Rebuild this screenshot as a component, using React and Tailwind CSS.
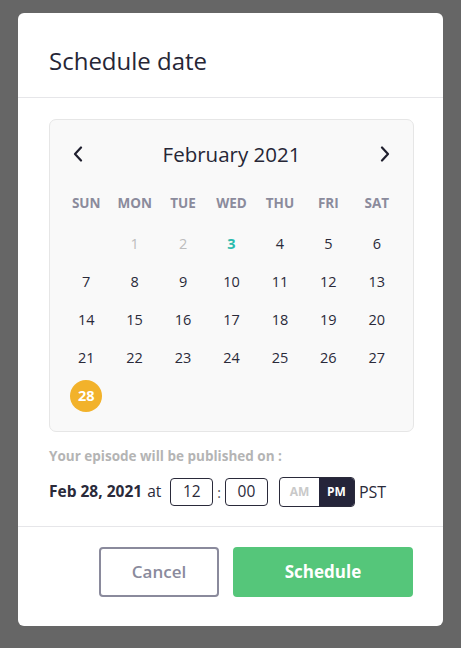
import React from "react";

const font = { fontFamily: '"Open Sans", "Noto Sans", sans-serif' };

function Chevron({ dir }) {
  return (
    <svg width="12" height="16" viewBox="0 0 12 16" fill="none">
      {dir === "left" ? (
        <path d="M9 1.5 L3 8 L9 14.5" stroke="#1f1f2e" strokeWidth="2.2" strokeLinecap="round" strokeLinejoin="round" />
      ) : (
        <path d="M3 1.5 L9 8 L3 14.5" stroke="#1f1f2e" strokeWidth="2.2" strokeLinecap="round" strokeLinejoin="round" />
      )}
    </svg>
  );
}

export default function App() {
  const heads = ["SUN", "MON", "TUE", "WED", "THU", "FRI", "SAT"];
  const cells = [null];
  for (let i = 1; i <= 28; i++) cells.push(i);

  return (
    <div className="w-[461px] h-[648px] bg-[#666666] pt-[13px] pl-[18px] overflow-hidden" style={font}>
      <div className="w-[425px] h-[613px] bg-white rounded-[6px] flex flex-col">
        <div className="h-[85px] border-b border-[#e6e6e9] pl-[31px] pt-[32px]">
          <div className="text-[24px] leading-[32px] font-medium text-[#262636]">Schedule date</div>
        </div>

        <div className="px-[31px] pt-[21px]">
          <div className="w-[365px] h-[313px] bg-[#f9f9f9] border border-[#e6e6e6] rounded-[7px] px-[12px]">
            <div className="mt-[14px] h-[40px] flex items-center justify-between px-[10px]">
              <Chevron dir="left" />
              <div className="text-[20.5px] text-[#262636]">February 2021</div>
              <Chevron dir="right" />
            </div>
            <div className="mt-[10px] h-[38px] grid grid-cols-7 items-center">
              {heads.map((h) => (
                <div key={h} className="text-center text-[13.5px] font-bold text-[#8b8b9c]">{h}</div>
              ))}
            </div>
            <div className="mt-[3px] grid grid-cols-7">
              {cells.map((d, i) => {
                let inner = null;
                if (d === 28) {
                  inner = (
                    <div className="w-[32px] h-[32px] rounded-full bg-[#f2b22b] text-white font-bold text-[14.5px] flex items-center justify-center">28</div>
                  );
                } else if (d === 1 || d === 2) {
                  inner = <span className="text-[14.5px] text-[#bdbdbd]">{d}</span>;
                } else if (d === 3) {
                  inner = <span className="text-[14.5px] font-bold text-[#2bbbad]">{d}</span>;
                } else if (d) {
                  inner = <span className="text-[14.5px] text-[#2a2a3a]">{d}</span>;
                }
                return (
                  <div key={i} className="h-[38px] flex items-center justify-center">{inner}</div>
                );
              })}
            </div>
          </div>

          <div className="mt-[14px] text-[13.5px] font-bold text-[#b4b4b4] leading-[20px]">Your episode will be published on :</div>

          <div className="mt-[11px] flex items-center h-[30px] text-[#2a2a3a]">
            <span className="text-[15.5px] font-bold">Feb 28, 2021</span>
            <span className="text-[15.5px] ml-[5px]">at</span>
            <div className="ml-[9px] w-[43px] h-[28px] border border-[#2a2a3a] rounded-[4px] flex items-center justify-center text-[15.5px]">12</div>
            <span className="mx-[4px] text-[14px] text-[#555]">:</span>
            <div className="w-[43px] h-[28px] border border-[#2a2a3a] rounded-[4px] flex items-center justify-center text-[15.5px]">00</div>
            <div className="ml-[11px] w-[76px] h-[30px] border border-[#2a2a3a] rounded-[4px] flex overflow-hidden">
              <div className="w-[39px] flex items-center justify-center text-[12px] font-bold text-[#c9c9c9]">AM</div>
              <div className="flex-1 bg-[#25253a] flex items-center justify-center text-[12px] font-bold text-white">PM</div>
            </div>
            <span className="ml-[4px] text-[16px]">PST</span>
          </div>
        </div>

        <div className="mt-[19px] border-t border-[#e6e6e9] flex justify-end gap-[14px] pr-[30px] pt-[20px]">
          <button className="w-[120px] h-[50px] border-2 border-[#8a8a9c] rounded-[4px] text-[17px] font-semibold text-[#8a8a9c] bg-white">Cancel</button>
          <button className="w-[180px] h-[50px] rounded-[4px] bg-[#55c67a] text-[17px] font-bold text-white">Schedule</button>
        </div>
      </div>
    </div>
  );
}
